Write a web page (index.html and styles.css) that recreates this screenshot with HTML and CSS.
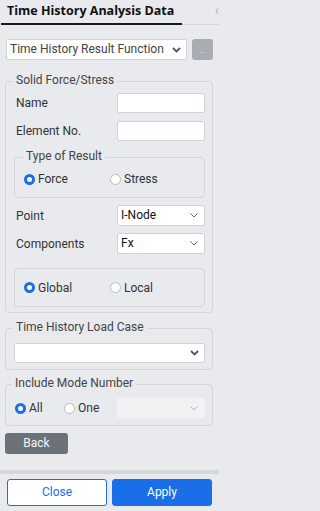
FILE: index.html
```html
<!DOCTYPE html>
<html>
<head>
<meta charset="utf-8">
<link rel="stylesheet" href="styles.css">
</head>
<body>
<div class="panel">
  <div class="tabs">
    <div class="tab">Time History Analysis Data</div>
    <div class="tab-rest"><span class="tab-arrow">&lsaquo;</span></div>
  </div>
  <div class="content">
    <div class="func-row">
      <div class="select main-select">
        <span class="sel-text">Time History Result Function</span>
        <svg class="chev" viewBox="0 0 9 6" width="9" height="6"><path d="M1 1 L4.5 4.5 L8 1" fill="none" stroke="#555" stroke-width="1.8"/></svg>
      </div>
      <div class="dots-btn">...</div>
    </div>

    <div class="group solid">
      <div class="legend lg-solid">Solid Force/Stress</div>
      <div class="row">
        <span class="label">Name</span>
        <div class="input"></div>
      </div>
      <div class="row second">
        <span class="label">Element No.</span>
        <div class="input"></div>
      </div>
      <div class="group inner type">
        <div class="legend lg-type">Type of Result</div>
        <div class="radios">
          <div class="radio-item"><span class="radio on"></span>Force</div>
          <div class="radio-item"><span class="radio"></span>Stress</div>
        </div>
      </div>
      <div class="row sel-row point">
        <span class="label">Point</span>
        <div class="select small">
          <span class="sel-text dark">I-Node</span>
          <svg class="chev" viewBox="0 0 8 5" width="8" height="5"><path d="M0.5 0.5 L4 4 L7.5 0.5" fill="none" stroke="#666" stroke-width="1"/></svg>
        </div>
      </div>
      <div class="row sel-row comp">
        <span class="label">Components</span>
        <div class="select small">
          <span class="sel-text dark">Fx</span>
          <svg class="chev" viewBox="0 0 8 5" width="8" height="5"><path d="M0.5 0.5 L4 4 L7.5 0.5" fill="none" stroke="#666" stroke-width="1"/></svg>
        </div>
      </div>
      <div class="group inner axis">
        <div class="radios">
          <div class="radio-item"><span class="radio on"></span>Global</div>
          <div class="radio-item"><span class="radio"></span>Local</div>
        </div>
      </div>
    </div>

    <div class="group load">
      <div class="legend lg-load">Time History Load Case</div>
      <div class="select wide">
        <span class="sel-text"></span>
        <svg class="chev" viewBox="0 0 9 6" width="9" height="6"><path d="M1 1 L4.5 4.5 L8 1" fill="none" stroke="#555" stroke-width="1.8"/></svg>
      </div>
    </div>

    <div class="group mode">
      <div class="legend lg-mode">Include Mode Number</div>
      <div class="mode-row">
        <div class="radio-item all"><span class="radio on"></span>All</div>
        <div class="radio-item one"><span class="radio"></span>One</div>
        <div class="select small disabled">
          <span class="sel-text"></span>
          <svg class="chev" viewBox="0 0 8 5" width="8" height="5"><path d="M0.5 0.5 L4 4 L7.5 0.5" fill="none" stroke="#b5b7ba" stroke-width="1"/></svg>
        </div>
      </div>
    </div>

    <div class="back-btn">Back</div>
  </div>
  <div class="footer">
    <div class="btn close">Close</div>
    <div class="btn apply">Apply</div>
  </div>
</div>
</body>
</html>
```

FILE: styles.css
```css
* { box-sizing: border-box; }
html, body { margin: 0; padding: 0; }
body {
  background: #e9eaee;
  font-family: Roboto, "Liberation Sans", sans-serif;
  font-size: 12px;
  color: #333;
  width: 219px;
  height: 511px;
  overflow: hidden;
}
.panel { display: flex; flex-direction: column; height: 511px; }

/* header tab */
.tabs { display: flex; height: 25px; }
.tab {
  flex: none;
  width: 181px;
  margin-left: 1px;
  padding-left: 6px;
  height: 25px;
  font-family: "Open Sans", "Noto Sans", sans-serif;
  font-weight: 700;
  font-size: 12.5px;
  color: #111;
  line-height: 22px;
  border-bottom: 2px solid #1b1b1b;
  white-space: nowrap;
}
.tab-rest {
  flex: 1;
  border-bottom: 1px solid #d3d5d9;
  display: flex;
  justify-content: flex-end;
}
.tab-arrow {
  color: #b8babe;
  font-size: 14px;
  line-height: 20px;
  margin-right: 0;
}

.content { padding: 0 6px 0 5px; flex: 1; display: flex; flex-direction: column; }

/* function select row */
.func-row { display: flex; margin-top: 14px; margin-left: 1px; gap: 5px; }
.select {
  display: flex;
  align-items: center;
  justify-content: space-between;
  background: #fff;
  border: 1px solid #cfd2d7;
  border-radius: 2px;
  height: 21px;
  padding: 0 6px 0 3px;
}
.main-select { width: 181px; padding-right: 5px; }
.sel-text { color: #444; white-space: nowrap; line-height: 19px; }
.sel-text.dark { color: #111; }
.chev { flex: none; display: block; }
.dots-btn {
  width: 21px;
  height: 21px;
  background: #a9adb3;
  border-radius: 3px;
  color: #c9ccd0;
  font-size: 10px;
  text-align: center;
  line-height: 22px;
  letter-spacing: -0.5px;
}

/* groups (fieldset look) */
.group {
  border: 1px solid #d4d6da;
  border-radius: 4px;
  display: flex;
  flex-direction: column;
  align-items: stretch;
}
.legend {
  align-self: flex-start;
  height: 12px;
  line-height: 12px;
  margin-top: -8px;
  padding: 0 3px;
  background: #e9eaee;
  color: #444;
  white-space: nowrap;
}
/* each legend: left offset from the group's inner edge, and gap to the first row */
.lg-solid { margin-left: -1px; margin-bottom: 7px; }
.lg-type { margin-left: -1px; margin-bottom: 10px; }
.lg-load { margin-left: -1px; margin-bottom: 10px; }
.lg-mode { margin-left: -3px; margin-bottom: 9px; }

.solid { margin-top: 21px; padding: 0 7px 5px 8px; }
.row {
  display: flex;
  align-items: center;
  justify-content: space-between;
  height: 20px;
}
.row.second { margin-top: 8px; }
.label { padding-left: 2px; color: #333; }
.input {
  width: 88px;
  height: 20px;
  background: #fff;
  border: 1px solid #cfd2d7;
  border-radius: 2px;
}

.inner { padding-left: 9px; padding-right: 8px; }
.type { margin-top: 16px; height: 41px; }
.radios { display: flex; }
.radio-item { display: flex; align-items: center; color: #333; white-space: nowrap; }
.radios .radio-item { width: 90px; }
.radio {
  width: 11px;
  height: 11px;
  border-radius: 50%;
  border: 1px solid #b9bcc0;
  background: #fff;
  flex: none;
  margin-right: 3px;
}
.radio.on { border: 3.5px solid #1a6ee8; }

.sel-row { height: 21px; }
.sel-row .select { width: 88px; }
.point { margin-top: 7px; }
.comp { margin-top: 7px; }
.axis { margin-top: 14px; height: 39px; justify-content: center; }

.load { margin-top: 15px; padding: 0 7px 6px 8px; }
.load .select { height: 20px; padding-right: 5px; }

.mode { margin-top: 14px; padding: 0 7px 0 9px; height: 42px; }
.mode-row { display: flex; align-items: center; height: 20px; }
.mode-row .all { width: 49px; }
.mode-row .one { width: 53px; }
.mode .select { width: 88px; height: 20px; margin-left: auto; }
.select.disabled { background: #f1f2f4; border-color: #f1f2f4; }

.back-btn {
  margin-top: 7px;
  width: 63px;
  height: 21px;
  background: #6c7279;
  color: #f4f4f4;
  border-radius: 3px;
  text-align: center;
  line-height: 21px;
}

/* footer */
.footer {
  border-top: 4px solid #d6d7da;
  display: flex;
  gap: 5px;
  padding: 5px 7px 5px 7px;
}
.btn {
  width: 100px;
  height: 27px;
  border-radius: 3px;
  text-align: center;
  line-height: 25px;
  border: 1px solid #1a6ee8;
}
.close { background: #fff; color: #1a6ee8; }
.apply { background: #1a6ee8; color: #fff; }
```
